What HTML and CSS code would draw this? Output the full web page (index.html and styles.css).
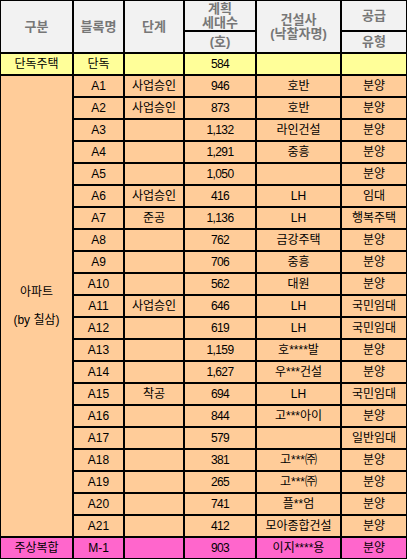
FILE: index.html
```html
<!DOCTYPE html>
<html lang="ko">
<head>
<meta charset="utf-8">
<link rel="stylesheet" href="styles.css">
</head>
<body>
<table class="plan">
  <colgroup>
    <col class="c1"><col class="c2"><col class="c3"><col class="c4"><col class="c5"><col class="c6">
  </colgroup>
  <thead>
    <tr class="h1">
      <th rowspan="2">구분</th>
      <th rowspan="2">블록명</th>
      <th rowspan="2">단계</th>
      <th class="two">계획<br>세대수</th>
      <th rowspan="2" class="two">건설사<br>(낙찰자명)</th>
      <th>공급</th>
    </tr>
    <tr class="h2">
      <th>(호)</th>
      <th>유형</th>
    </tr>
  </thead>
  <tbody>
    <tr class="yellow"><td>단독주택</td><td class="lat">단독</td><td></td><td class="num">584</td><td></td><td></td></tr>
    <tr class="orange"><td rowspan="21" class="apt">아파트<br><br>(by 칠삼)</td><td class="lat">A1</td><td>사업승인</td><td class="num">946</td><td>호반</td><td>분양</td></tr>
    <tr class="orange"><td class="lat">A2</td><td>사업승인</td><td class="num">873</td><td>호반</td><td>분양</td></tr>
    <tr class="orange"><td class="lat">A3</td><td></td><td class="num">1,132</td><td>라인건설</td><td>분양</td></tr>
    <tr class="orange"><td class="lat">A4</td><td></td><td class="num">1,291</td><td>중흥</td><td>분양</td></tr>
    <tr class="orange"><td class="lat">A5</td><td></td><td class="num">1,050</td><td></td><td>분양</td></tr>
    <tr class="orange"><td class="lat">A6</td><td>사업승인</td><td class="num">416</td><td class="lat">LH</td><td>임대</td></tr>
    <tr class="orange"><td class="lat">A7</td><td>준공</td><td class="num">1,136</td><td class="lat">LH</td><td>행복주택</td></tr>
    <tr class="orange"><td class="lat">A8</td><td></td><td class="num">762</td><td>금강주택</td><td>분양</td></tr>
    <tr class="orange"><td class="lat">A9</td><td></td><td class="num">706</td><td>중흥</td><td>분양</td></tr>
    <tr class="orange"><td class="lat">A10</td><td></td><td class="num">562</td><td>대원</td><td>분양</td></tr>
    <tr class="orange"><td class="lat">A11</td><td>사업승인</td><td class="num">646</td><td class="lat">LH</td><td>국민임대</td></tr>
    <tr class="orange"><td class="lat">A12</td><td></td><td class="num">619</td><td class="lat">LH</td><td>국민임대</td></tr>
    <tr class="orange"><td class="lat">A13</td><td></td><td class="num">1,159</td><td>호****발</td><td>분양</td></tr>
    <tr class="orange"><td class="lat">A14</td><td></td><td class="num">1,627</td><td>우***건설</td><td>분양</td></tr>
    <tr class="orange"><td class="lat">A15</td><td>착공</td><td class="num">694</td><td class="lat">LH</td><td>국민임대</td></tr>
    <tr class="orange"><td class="lat">A16</td><td></td><td class="num">844</td><td>고***아이</td><td>분양</td></tr>
    <tr class="orange"><td class="lat">A17</td><td></td><td class="num">579</td><td></td><td>일반임대</td></tr>
    <tr class="orange"><td class="lat">A18</td><td></td><td class="num">381</td><td>고***㈜</td><td>분양</td></tr>
    <tr class="orange"><td class="lat">A19</td><td></td><td class="num">265</td><td>고***㈜</td><td>분양</td></tr>
    <tr class="orange"><td class="lat">A20</td><td></td><td class="num">741</td><td>플**엄</td><td>분양</td></tr>
    <tr class="orange"><td class="lat">A21</td><td></td><td class="num">412</td><td>모아종합건설</td><td>분양</td></tr>
    <tr class="pink"><td>주상복합</td><td class="lat">M-1</td><td></td><td class="num">903</td><td>이지****용</td><td>분양</td></tr>
  </tbody>
</table>
</body>
</html>
```

FILE: styles.css
```css
html, body {
  margin: 0;
  padding: 0;
  background: #ffffff;
}

.plan {
  border-collapse: separate;
  border-spacing: 0;
  table-layout: fixed;
  width: 407px;
  font-family: "Liberation Sans", "Noto Sans CJK KR", sans-serif;
  font-size: 12px;
  color: #000;
}

.c1 { width: 73px; }
.c2 { width: 51px; }
.c3 { width: 60px; }
.c4 { width: 72px; }
.c5 { width: 85px; }
.c6 { width: 66px; }

.plan th,
.plan td {
  border: 1px solid #000;
  padding: 0;
  text-align: center;
  vertical-align: middle;
  white-space: nowrap;
  overflow: hidden;
}

.plan th {
  background: #f2f2f2;
  color: #777777;
  font-weight: bold;
  font-size: 13px;
  line-height: 14px;
}

.h1 th { height: 29px; }
.h2 th { height: 20px; }

.plan td {
  height: 20px;
  line-height: 14px;
}

.yellow td { background: #ffff99; }
.orange td { background: #ffcc99; }
.pink td { background: #ff66cc; }

.num {
  font-size: 12px;
  letter-spacing: -0.6px;
}

.lat { font-size: 12px; }

.apt { line-height: 15px; }
```
